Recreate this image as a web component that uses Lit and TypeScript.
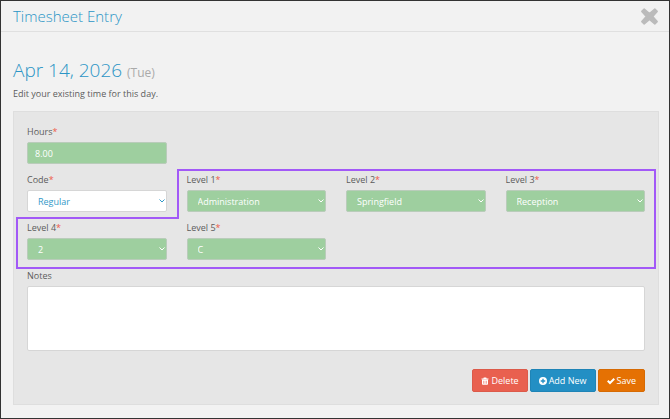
import { LitElement, html, css, svg } from "lit";
import { customElement, property } from "lit/decorators.js";
import { classMap } from "lit/directives/class-map.js";

const icons = {
  close: svg`<path d="M3 1 L8 5.200 L13 1 L15.200 3.200 L11 8 L15.200 12.800 L13 15 L8 10.800 L3 15 L0.800 12.800 L5 8 L0.800 3.200 Z" fill="currentColor" stroke="currentColor" stroke-width="1.400" stroke-linejoin="round"/>`,
  trash: svg`<path fill-rule="evenodd" d="M5.5 1h5l.8 2H15v2H1V3h3.700zM2 5.500h12V14q0 1.500-1.500 1.500h-9Q2 15.500 2 14zM4.700 7.500v6h1v-6zM7.500 7.500v6h1v-6zM10.300 7.500v6h1v-6z"/>`,
  plus: svg`<path fill-rule="evenodd" d="M8 0a8 8 0 1 0 0 16a8 8 0 0 0 0-16zM6.700 3.500h2.600v3.200h3.200v2.600H9.300v3.200H6.700V9.300H3.500V6.700h3.200z"/>`,
  check: svg`<path d="M1.500 7.500 L6 12 L14.500 3.500" fill="none" stroke="currentColor" stroke-width="4"/>`,
};

@customElement("select-field")
class SelectField extends LitElement {
  @property() label = "";
  @property() value = "";
  @property({ type: Boolean }) plain = false;

  static styles = css`
    :host { display: block; min-width: 0; }
    .label { display: block; height: 20px; line-height: 20px; }
    .required { color: #ee5a48; }
    .box { position: relative; color: #fff; }
    .box.plain { color: #3399c8; }
    .select {
      display: block; box-sizing: border-box; width: 100%; height: 22px;
      margin: 0; padding: 0 16px 0 10px; appearance: none;
      border: 1px solid #b9ccba; border-radius: 2px;
      background: #9ecf9f; color: inherit; font: inherit;
    }
    .plain .select { background: #fff; border-color: #d6d6d6; }
    .chevron {
      position: absolute; right: 2px; top: 8px; width: 6px; height: 6px;
      pointer-events: none; fill: none; stroke: currentColor; stroke-width: 1;
    }
  `;

  render() {
    return html`
      <label class="label" for="control">${this.label}<span class="required">*</span></label>
      <div class=${classMap({ box: true, plain: this.plain })}>
        <select class="select" id="control"><option selected>${this.value}</option></select>
        <svg class="chevron" viewBox="0 0 6 6" aria-hidden="true"><path d="M0.500 1.500 L3 4 L5.500 1.500"/></svg>
      </div>
    `;
  }
}

@customElement("app-root")
class AppRoot extends LitElement {
  static styles = css`
    :host {
      display: block; box-sizing: border-box; min-height: 100vh;
      border: 1px solid #333; background: #f2f2f2; color: #5c5c5c;
      font-family: "Open Sans", "Noto Sans", sans-serif; font-size: 9px;
    }
    .header {
      display: flex; align-items: center; justify-content: space-between;
      box-sizing: border-box; height: 31px; padding: 0 11px 0 12px;
      border-bottom: 1px solid #e0e0e0;
    }
    .title { margin: 0; font-size: 15px; line-height: 24px; font-weight: 300; color: #2b95c6; }
    .close { display: flex; padding: 0; border: 0; background: none; color: #bbb; cursor: pointer; }
    .close svg { width: 17px; height: 17px; }
    .main { padding: 24px 10px 13px 12px; }
    .date { margin: 0; font-size: 19px; line-height: 28px; font-weight: 300; color: #2b95c6; }
    .weekday { font-size: 12px; font-weight: 400; color: #aaa; }
    .hint { margin: 0 0 10px; line-height: 14px; }
    .panel { padding: 10px 13px 12px; border: 1px solid #dedede; background: #e6e6e6; }
    .fields { display: grid; grid-template-columns: repeat(4, minmax(0, 1fr)); gap: 6px 20px; }
    .row-start { grid-column: 1; }
    .label { display: block; height: 20px; line-height: 20px; }
    .required { color: #ee5a48; }
    .input, .notes {
      display: block; box-sizing: border-box; width: 100%; margin: 0;
      border: 1px solid #b9ccba; border-radius: 2px; font: inherit;
    }
    .input { height: 22px; padding: 0 7px; background: #9ecf9f; color: #fff; }
    .notes-field { margin-top: 6px; }
    .notes { height: 65px; padding: 4px 7px; resize: none; background: #fff; border-color: #d6d6d6; }
    .outline { border: 0 solid #a259f7; pointer-events: none; z-index: 1; }
    .outline-top { grid-area: 2 / 2 / 3 / 5; margin: -1px -11px -7px -10px; border-width: 2px 2px 0 2px; }
    .outline-left { grid-area: 3 / 1 / 4 / 2; margin: -1px -12px -9px -11px; border-width: 2px 0 2px 2px; }
    .outline-right { grid-area: 3 / 2 / 4 / 5; margin: -1px -11px -9px -10px; border-width: 0 2px 2px 0; }
    .pos-code { grid-area: 2 / 1; }
    .pos-level1 { grid-area: 2 / 2; }
    .pos-level2 { grid-area: 2 / 3; }
    .pos-level3 { grid-area: 2 / 4; }
    .pos-level4 { grid-area: 3 / 1; }
    .pos-level5 { grid-area: 3 / 2; }
    .actions { display: flex; justify-content: flex-end; gap: 2px; margin-top: 18px; }
    .button {
      display: flex; align-items: center; gap: 2px; height: 23px; padding: 0 8px;
      border: 1px solid; border-radius: 2px; color: #fff; font: inherit; cursor: pointer;
    }
    .button svg { width: 8px; height: 8px; fill: currentColor; }
    .delete { background: #e9604f; border-color: #dc5a4a; }
    .add { background: #238fc4; border-color: #1f84b6; }
    .save { background: #e57103; border-color: #d66a03; }
  `;

  private icon(shape: unknown) {
    return html`<svg viewBox="0 0 16 16" aria-hidden="true">${shape}</svg>`;
  }

  render() {
    return html`
      <header class="header">
        <h1 class="title">Timesheet Entry</h1>
        <button class="close" aria-label="Close">${this.icon(icons.close)}</button>
      </header>
      <main class="main">
        <h2 class="date">Apr 14, 2026 <span class="weekday">(Tue)</span></h2>
        <p class="hint">Edit your existing time for this day.</p>
        <section class="panel">
          <div class="fields">
            <div class="row-start">
              <label class="label" for="hours">Hours<span class="required">*</span></label>
              <input class="input" id="hours" type="text" value="8.00" />
            </div>
            <select-field class="pos-code" label="Code" value="Regular" plain></select-field>
            <select-field class="pos-level1" label="Level 1" value="Administration"></select-field>
            <select-field class="pos-level2" label="Level 2" value="Springfield"></select-field>
            <select-field class="pos-level3" label="Level 3" value="Reception"></select-field>
            <select-field class="pos-level4" label="Level 4" value="2"></select-field>
            <select-field class="pos-level5" label="Level 5" value="C"></select-field>
            <div class="outline outline-top"></div>
            <div class="outline outline-left"></div>
            <div class="outline outline-right"></div>
          </div>
          <div class="notes-field">
            <label class="label" for="notes">Notes</label>
            <textarea class="notes" id="notes"></textarea>
          </div>
          <div class="actions">
            <button class="button delete">${this.icon(icons.trash)}Delete</button>
            <button class="button add">${this.icon(icons.plus)}Add New</button>
            <button class="button save">${this.icon(icons.check)}Save</button>
          </div>
        </section>
      </main>
    `;
  }
}
